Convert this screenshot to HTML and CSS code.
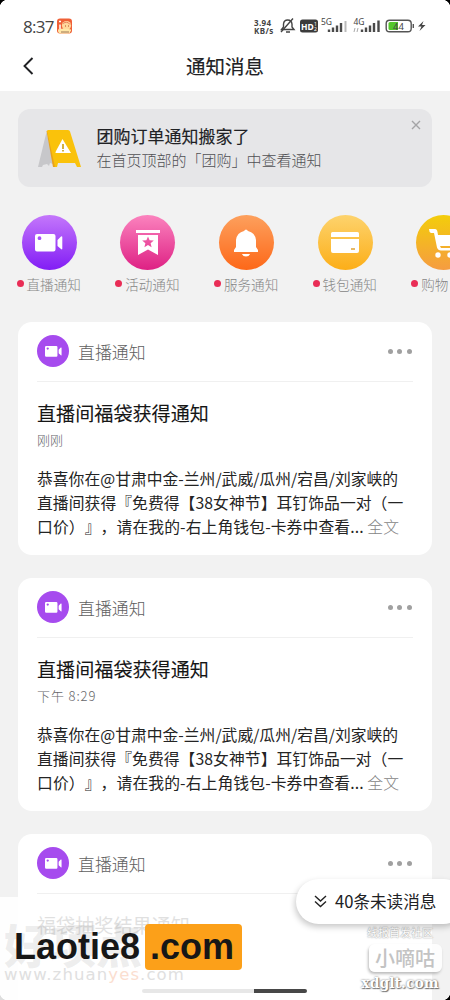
FILE: index.html
```html
<!DOCTYPE html>
<html lang="zh-CN">
<head>
<meta charset="utf-8">
<title>通知消息</title>
<link rel="stylesheet" href="styles.css">
</head>
<body>
<svg class="defs" width="0" height="0">
  <defs>
    <symbol id="video" viewBox="0 0 28 18"><path fill="#fff" fill-rule="evenodd" d="M2 0H18.500a2 2 0 0 1 2 2V15.500a2 2 0 0 1-2 2H2a2 2 0 0 1-2-2V2a2 2 0 0 1 2-2ZM4.500 2.300a1.900 1.900 0 1 0 0 3.800 1.900 1.900 0 0 0 0-3.800ZM22.500 6 26 2.600q1.300-.7 1.300.7V14.500q0 1.400-1.300.6L22.500 12Z"/></symbol>
  </defs>
</svg>
<div class="phone">
  <header class="top">
    <div class="status">
      <span class="clock">8:37</span>
      <svg class="app" viewBox="0 0 15 15"><rect width="15" height="15" rx="3" fill="#ef6037"/><path d="M2 3h2M3 6v5" stroke="#fff" stroke-width="1.500"/><circle cx="9.500" cy="7" r="4.600" fill="#ffd79b"/><path d="M6 5q4-3 7 1" stroke="#e9805d" fill="none" stroke-width="1"/><path d="M8 7.500h1M11 7.500h1" stroke="#b94b27"/><path d="M1 11q6-2 13 0v1q-1 3-3 3H4q-3 0-3-3" fill="#ffe7a7"/><path d="M4 13.500h8" stroke="#9e7554"/></svg>
      <span class="grow"></span>
      <span class="speed"><span>3.94</span><span>KB/s</span></span>
      <svg class="signals" viewBox="0 0 150 20" width="150" height="20">
        <g fill="none" stroke="#444" stroke-width="1.400"><path d="M1.500 12.500H14L12 10V7Q11.500 3 7.700 3T3.500 7V10Z"/><path d="M1 15 13 1.500M6 15h4" /></g>
        <rect x="20" y="2.500" width="18" height="13" rx="2.500" fill="#3b3b3b"/>
        <text x="21" y="12.500" class="hd">HD</text><text x="34" y="8.500" class="tiny light">1</text><text x="34" y="14" class="tiny light">2</text>
        <text x="41" y="8" class="net">5G</text>
        <path d="M49 15v-2.500M53 15v-4.500M57 15V8.500M61 15V6" stroke="#4a4a4a" stroke-width="2.400"/><path d="M65.500 15V4" stroke="#bbb" stroke-width="2"/>
        <text x="73.500" y="8" class="net">4G</text><path d="m75 11-1 4M78 11l-1 4" stroke="#aaa"/>
        <path d="M82 15v-2.500M86 15v-4.500M90 15V8.500M94 15V6M98.500 15V3.500" stroke="#4a4a4a" stroke-width="2.400"/>
        <rect x="106.200" y="3.200" width="25" height="11.500" rx="3.300" fill="#fff" stroke="#555" stroke-width="1.400"/><path d="M110 5h8v8H110q-1.500 0-1.500-1.500v-5Q108.500 5 110 5" fill="#55c72b"/><path d="M133.300 7v4" stroke="#555" stroke-width="1.400"/><text x="113" y="12.500" class="charge">44</text>
        <path d="m143.500 4-5.500 5.500h3.500l-2 4.500 6-6h-3.500Z" fill="#444"/>
      </svg>
    </div>
    <div class="nav"><svg class="back" viewBox="0 0 12 20"><path d="m10.500 2-8 8 8 8" fill="none" stroke="#202124" stroke-width="1.900"/></svg><h1>通知消息</h1></div>
  </header>
  <main>
    <section class="notice">
      <svg class="sign" viewBox="0 0 43 39"><path fill="#c7c7ca" d="M8.500 3 15 30v5l-3-1-1 3-2-2-4 1-1 2H0Z"/><path fill="#e9a21c" d="M8.500 2 12 1l7 37h-4Z"/><path fill="#fac20b" d="M10 1h20q1.500 0 2 1.500L43 38h-4l-2-4H20l-1 4h-2L9 2Z"/><path fill="#fff" d="m24.500 10 8.500 14H17.500q0-1 .5-2Z"/><path d="M25 15v5M25 21v1.500" stroke="#c69600" stroke-width="1.500"/></svg>
      <div class="notice-copy"><strong>团购订单通知搬家了</strong><span>在首页顶部的「团购」中查看通知</span></div>
      <svg class="close" viewBox="0 0 10 10"><path d="m1 1 8 8M9 1 1 9" stroke="#a4a4a6" stroke-width="1.400"/></svg>
    </section>
    <nav class="categories">
      <div class="category"><div class="disc live"><svg width="28" height="18"><use href="#video"/></svg></div><span class="label">直播通知</span></div>
      <div class="category"><div class="disc event"><svg width="24" height="26" viewBox="0 0 24 26"><path fill="#fff" fill-rule="evenodd" d="M0 0h24v3H0ZM2 5h20v20l-10-5.500L2 25ZM12 6.500l-1.600 3.700-4.200.4 3.200 2.600-1 4 3.600-2.100 3.600 2.100-1-4 3.200-2.600-4.200-.4Z"/></svg></div><span class="label">活动通知</span></div>
      <div class="category"><div class="disc service"><svg width="24" height="28" viewBox="0 0 24 28"><path fill="#fff" d="M10 2q2-3 4 0 7 1.500 8 9v7l2 3v2H0v-2l2-3v-7q1-7.500 8-9ZM8 25h8q-1 2.500-4 2.500T8 25Z"/></svg></div><span class="label">服务通知</span></div>
      <div class="category"><div class="disc wallet"><svg width="28" height="21" viewBox="0 0 28 21"><path fill="#fff" d="M1.500 0h25Q28 0 28 1.500V5H0V1.500Q0 0 1.500 0ZM0 7h28v12q0 2-2 2H2q-2 0-2-2Z"/><path d="M20 17h4" stroke="#e1a334" stroke-width="1.500"/></svg></div><span class="label">钱包通知</span></div>
      <div class="category"><div class="disc shop"><svg width="29" height="30" viewBox="0 0 29 30"><path fill="#fff" d="M0 1h6q2 0 2.500 3L9 7h20l-3 11H11l1 2h14v2.500H12q-3 0-4-3L5 5H2Q0 4 0 1Z"/><circle cx="9" cy="27" r="2.700" fill="#fff"/><circle cx="21" cy="27" r="2.700" fill="#fff"/></svg></div><span class="label">购物</span></div>
    </nav>
    <article class="card">
      <div class="card-head"><span class="mini"><svg width="17" height="11"><use href="#video"/></svg></span><span class="source">直播通知</span><span class="dots"><i></i><i></i><i></i></span></div>
      <h2>直播间福袋获得通知</h2><time>刚刚</time>
      <div class="copy"><p class="line-a">恭喜你在@甘肃中金-兰州/武威/瓜州/宕昌/刘家峡的</p><p class="line-b">直播间获得『免费得【38女神节】耳钉饰品一对（一</p><p class="line-c">口价）』，请在我的-右上角钱包-卡券中查看... <span>全文</span></p></div>
    </article>
    <article class="card">
      <div class="card-head"><span class="mini"><svg width="17" height="11"><use href="#video"/></svg></span><span class="source">直播通知</span><span class="dots"><i></i><i></i><i></i></span></div>
      <h2>直播间福袋获得通知</h2><time class="wide">下午 8:29</time>
      <div class="copy"><p class="line-a">恭喜你在@甘肃中金-兰州/武威/瓜州/宕昌/刘家峡的</p><p class="line-b">直播间获得『免费得【38女神节】耳钉饰品一对（一</p><p class="line-c">口价）』，请在我的-右上角钱包-卡券中查看... <span>全文</span></p></div>
    </article>
    <article class="card">
      <div class="card-head"><span class="mini"><svg width="17" height="11"><use href="#video"/></svg></span><span class="source">直播通知</span><span class="dots"><i></i><i></i><i></i></span></div>
      <h2>福袋抽奖结果通知</h2>
    </article>
  </main>
  <div class="gesture"></div>
  <div class="watermark">
    <span class="wm-name">好项点网</span><span class="wm-url">www.zhuan<b>yes</b>.com</span>
    <div class="brand"><span>Laotie8</span><span class="brand-end">.com</span></div>
  </div>
  <div class="community"><span class="community-top">线报首发社区</span><span class="community-name">小嘀咕</span><span class="community-url">xdglt.com</span></div>
  <div class="unread"><svg width="13" height="13" viewBox="0 0 13 13"><path d="m1 1 5.500 5L12 1M1 6.500l5.500 5 5.500-5" fill="none" stroke="#222" stroke-width="1.400"/></svg><span>40条未读消息</span></div>
  <i class="corner tl"></i><i class="corner tr"></i><i class="corner br"></i><i class="corner bl"></i>
</div>
</body>
</html>
```

FILE: styles.css
```css
* { box-sizing: border-box; }
body { margin: 0; font-family: "Noto Sans CJK SC", sans-serif; color: #202124; text-spacing-trim: space-all; }
h1, h2, p { margin: 0; font-weight: 400; }
svg { display: block; flex: none; }
.defs { position: absolute; }
.phone { position: relative; width: 450px; height: 1000px; overflow: hidden; background: #f2f2f2; }
.top { height: 91px; background: #fff; }
.status { height: 45px; padding: 17px 20px 0 23px; display: flex; align-items: flex-start; }
.clock { font: 17px/19px "Open Sans", sans-serif; letter-spacing: -.7px; color: #444; width: 34px; white-space: nowrap; }
.app { width: 15px; height: 16px; margin-top: 1px; }
.grow { flex: 1; }
.speed { display: flex; flex-direction: column; width: 26px; margin-top: 2px; font: bold 8px/8px "Noto Sans", sans-serif; letter-spacing: .4px; color: #444; }
.signals text { font-family: "Noto Sans", sans-serif; fill: #444; }
.signals .hd { font-size: 8.5px; font-weight: 700; fill: #fff; }
.signals .tiny { font-size: 5px; }
.signals .light { fill: #fff; }
.signals .net { font-size: 8.5px; }
.signals .charge { font-size: 9.500px; }
.nav { height: 41px; padding: 0 22px; display: grid; grid-template-columns: 20px 1fr 20px; align-items: center; }
.back { width: 12px; height: 20px; }
h1 { text-align: center; font-size: 19.500px; line-height: 28px; -webkit-text-stroke: .15px; }
main { padding: 18px 18.500px 0 18px; }
.notice { height: 78px; padding: 16px 11px 0 20px; display: flex; border-radius: 12px; background: #e6e6e8; }
.sign { width: 43px; height: 39px; margin-top: 4px; }
.notice-copy { display: flex; flex-direction: column; margin-left: 15.500px; flex: 1; white-space: nowrap; }
.notice-copy strong { font-size: 17px; line-height: 22px; font-weight: 400; -webkit-text-stroke: .15px; }
.notice-copy span { font-size: 15px; line-height: 24px; margin-top: 1px; color: #505054; font-weight: 300; }
.close { width: 10px; height: 10px; margin-top: -5px; }
.categories { display: flex; gap: 32px; width: 490px; margin: 28px 0 0 -2.500px; }
.category { width: 66.700px; flex: none; }
.disc { width: 55px; height: 55px; margin-left: 6px; border-radius: 50%; display: flex; align-items: center; justify-content: center; }
.live { background: linear-gradient(#c477fb, #821df5); }
.event { background: linear-gradient(#fb83be, #de2184); }
.service { background: linear-gradient(#fda05d, #fd6819); }
.wallet { background: linear-gradient(#fdd36d, #fcae18); }
.shop { background: linear-gradient(#f3cd0b, #f59c41); }
.label { display: flex; align-items: center; gap: 3px; margin-left: 1px; height: 27px; margin-bottom: 1px; white-space: nowrap; font-size: 13.600px; font-weight: 300; color: #858585; }
.label::before { content: ""; flex: none; width: 7px; height: 7px; border-radius: 50%; background: #e92d56; }
.card { height: 233.500px; padding: 0 19px; margin-top: 23.500px; background: #fff; border-radius: 14px; }
.card + .card { margin-top: 22.500px; }
.card-head { height: 60px; display: flex; align-items: center; border-bottom: 1px solid #f0f0f0; }
.mini { width: 32px; height: 32px; border-radius: 50%; background: #a64bee; display: flex; align-items: center; justify-content: center; }
.source { margin-left: 9px; font-size: 16.900px; font-weight: 300; color: #606060; }
.dots { margin: 0 1px 0 auto; display: flex; gap: 4.500px; }
.dots i { width: 5px; height: 5px; border-radius: 50%; background: #a0a0a0; }
h2 { margin-top: 18px; font-size: 19.100px; line-height: 27px; color: #151515; -webkit-text-stroke: .1px; }
time { display: block; font-size: 13px; line-height: 18px; margin-top: 4px; color: #666669; font-weight: 300; }
.wide { letter-spacing: .9px; }
.copy { margin-top: 18px; font-size: 15.800px; line-height: 24px; color: #242424; white-space: nowrap; }
.copy p { height: 24px; }
.line-b { letter-spacing: .05px; }
.line-c { letter-spacing: .1px; }
.copy p span { color: #858585; font-weight: 300; }
.gesture { position: absolute; left: 142px; top: 989px; width: 165px; height: 4px; border-radius: 2px; background: #474747; }
.watermark { position: absolute; left: 0; top: 897px; width: 254px; height: 103px; background: rgba(255,255,255,.87); }
.wm-name, .wm-url, .brand { position: absolute; white-space: nowrap; }
.wm-name { left: 4px; top: 16px; font-size: 46px; line-height: 60px; font-weight: 900; color: rgba(120,120,120,.13); }
.wm-url { left: 4px; top: 68px; font: 16.5px/20px "DejaVu Sans", sans-serif; letter-spacing: 1.1px; color: #e0e0e0; }
.wm-url b { font-weight: 400; color: #fbded0; }
.brand { left: 14px; top: 27px; display: flex; font: bold 36px/45px "Liberation Sans", sans-serif; color: #171717; }
.brand span:first-child { width: 131px; height: 46px; line-height: 46px; }
.brand-end { width: 97px; height: 46px; padding-left: 5px; border-radius: 4px; background: #fca019; }
.community { position: absolute; left: 358px; top: 925px; width: 84px; height: 69px; display: flex; flex-direction: column; align-items: center; color: #fff; white-space: nowrap; }
.community-top { font-size: 11px; line-height: 14px; text-shadow: 0 0 1px #999, 0 0 2px #aaa; }
.community-name { width: 73px; height: 28px; margin: 5px 0 0 10px; border-radius: 6px; background: rgba(255,255,255,.8); color: #c3c3c3; text-align: center; font-size: 20px; font-weight: 500; line-height: 27px; box-shadow: -1px 2px 3px #bbb; }
.community-url { font: bold 14px/19px "DejaVu Serif", serif; margin-top: 2px; text-shadow: 0 0 2px #666, 1px 1px 1px #777; }
.unread { position: absolute; left: 296px; top: 879px; width: 170px; height: 45px; padding: 0 0 1px 18px; display: flex; align-items: center; gap: 8px; border-radius: 23px; background: #fff; box-shadow: -1px 3px 6px rgba(0,0,0,.22); font-size: 16.600px; white-space: nowrap; }
.corner { position: absolute; width: 8px; height: 8px; }
.tl { left: 0; top: 0; background: radial-gradient(circle at 8px 8px, transparent 8px, #000 8.700px); }
.tr { right: 0; top: 0; background: radial-gradient(circle at 0 8px, transparent 8px, #000 8.700px); }
.br { right: 0; bottom: 0; background: radial-gradient(circle at 0 0, transparent 8px, #000 8.700px); }
.bl { left: 0; bottom: 0; background: radial-gradient(circle at 8px 0, transparent 8px, #ddd 8.700px); }
```
